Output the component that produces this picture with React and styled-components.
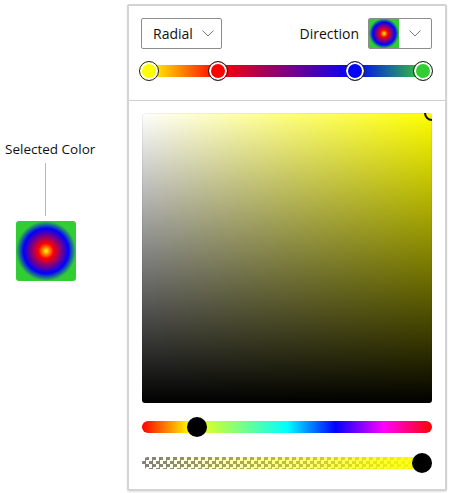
import React from "react";
import styled, { createGlobalStyle } from "styled-components";

const Global = createGlobalStyle`
  html, body { margin: 0; padding: 0; background: #fff; }
  body { font-family: "Open Sans", "Noto Sans", sans-serif; color: #111; }
`;

const Page = styled.div`
  display: flex;
  align-items: flex-start;
  width: 450px;
  height: 493px;
`;

const Side = styled.div`
  width: 127px;
  flex: none;
  display: flex;
  flex-direction: column;
  align-items: flex-start;
  padding: 140px 0 0 5px;
  box-sizing: border-box;
`;

const SideLabel = styled.div`
  font-size: 13.5px;
  line-height: 18px;
  white-space: nowrap;
`;

const Connector = styled.div`
  width: 1px;
  height: 53px;
  margin: 5px 0 0 40px;
  background: #e2b45a;
`;

const GRADIENT =
  "radial-gradient(circle closest-side, #ffff00 0%, #ff0000 25%, #0000ff 75%, #32cd32 100%)";

const Swatch = styled.div`
  width: ${(p) => p.$w}px;
  height: ${(p) => p.$h}px;
  margin-top: ${(p) => p.$mt || 0}px;
  margin-left: ${(p) => p.$ml || 0}px;
  border-radius: ${(p) => p.$r || 0}px;
  background: ${GRADIENT}, #32cd32;
  flex: none;
`;

const Panel = styled.div`
  margin-top: 4px;
  width: 320px;
  height: 487px;
  box-sizing: border-box;
  border: 2px solid #d3d3d3;
  border-radius: 2px;
  box-shadow: 0 1px 2px rgba(0, 0, 0, 0.12);
  background: #fff;
  display: flex;
  flex-direction: column;
`;

const Header = styled.div`
  padding: 12px 13px 19px 12px;
  border-bottom: 1px solid #d0d0d0;
  display: flex;
  flex-direction: column;
  gap: 12px;
`;

const TopRow = styled.div`
  display: flex;
  align-items: center;
  justify-content: space-between;
  height: 31px;
`;

const Select = styled.div`
  height: 31px;
  box-sizing: border-box;
  border: 1px solid #8c8c8c;
  border-radius: 2px;
  display: flex;
  align-items: center;
  overflow: hidden;
  width: ${(p) => p.$w}px;
  padding-left: ${(p) => p.$pl || 0}px;
  font-size: 14px;
  color: #111;
`;

const SelectText = styled.span`
  flex: 1;
  line-height: 20px;
`;

const ChevronBox = styled.span`
  display: flex;
  align-items: center;
  justify-content: center;
  width: ${(p) => p.$w}px;
  flex: none;
`;

const Chevron = () => (
  <svg width="12" height="7" viewBox="0 0 12 7">
    <path d="M0.5 0.5 L6 6 L11.5 0.5" fill="none" stroke="#7a7a7a" strokeWidth="1" />
  </svg>
);

const DirGroup = styled.div`
  display: flex;
  align-items: center;
  gap: 9px;
  font-size: 14px;
`;

const BarWrap = styled.div`
  position: relative;
  height: 20px;
  margin: 0 9px 0 8px;
  display: flex;
  align-items: center;
`;

const GradBar = styled.div`
  flex: 1;
  height: 12px;
  background: linear-gradient(to right, #ffff00 0%, #ff0000 25%, #0000ff 75%, #32cd32 100%);
`;

const Stop = styled.div`
  position: absolute;
  top: 0;
  width: 20px;
  height: 20px;
  box-sizing: border-box;
  margin-left: -10px;
  border-radius: 50%;
  border: 1px solid #222;
  box-shadow: inset 0 0 0 2px #fff;
  background: ${(p) => p.$c};
`;

const Body = styled.div`
  padding: 12px 13px 0 13px;
  display: flex;
  flex-direction: column;
`;

const Area = styled.div`
  position: relative;
  height: 290px;
  border-radius: 3px;
  overflow: hidden;
  background: linear-gradient(to top, #000, rgba(0, 0, 0, 0)),
    linear-gradient(to right, #fff, #ff0);
  box-shadow: inset 0 0 0 1px rgba(0, 0, 0, 0.06);
`;

const AreaHandle = styled.div`
  position: absolute;
  right: -8px;
  top: -8px;
  width: 16px;
  height: 16px;
  box-sizing: border-box;
  border: 2px solid #111;
  border-radius: 50%;
`;

const Slider = styled.div`
  position: relative;
  height: 20px;
  margin-top: ${(p) => p.$mt}px;
  display: flex;
  align-items: center;
`;

const HueTrack = styled.div`
  flex: 1;
  height: 12px;
  border-radius: 6px;
  background: linear-gradient(
    to right,
    #f00 0%,
    #ff0 16.67%,
    #0ff 50%,
    #00f 66.67%,
    #f0f 83.33%,
    #f00 100%
  );
`;

const AlphaTrack = styled.div`
  flex: 1;
  height: 12px;
  border-radius: 6px;
  background: linear-gradient(to right, rgba(255, 255, 0, 0), #ff0),
    repeating-conic-gradient(#7f7f7f 0 25%, #fff 0 50%) 0 0 / 7px 7px;
`;

const Thumb = styled.div`
  position: absolute;
  top: 0;
  width: 20px;
  height: 20px;
  margin-left: -10px;
  border-radius: 50%;
  background: #000;
`;

const stops = [
  { p: 0, c: "#ffff00" },
  { p: 25, c: "#ff0000" },
  { p: 75, c: "#0000ff" },
  { p: 100, c: "#32cd32" },
];

export default function App() {
  return (
    <>
      <Global />
      <Page>
        <Side>
          <SideLabel>Selected Color</SideLabel>
          <Connector />
          <Swatch $w={60} $h={60} $mt={5} $ml={11} $r={3} />
        </Side>
        <Panel>
          <Header>
            <TopRow>
              <Select $w={81} $pl={11}>
                <SelectText>Radial</SelectText>
                <ChevronBox $w={30}>
                  <Chevron />
                </ChevronBox>
              </Select>
              <DirGroup>
                <span>Direction</span>
                <Select $w={64}>
                  <Swatch $w={30} $h={31} />
                  <ChevronBox $w={32}>
                    <Chevron />
                  </ChevronBox>
                </Select>
              </DirGroup>
            </TopRow>
            <BarWrap>
              <GradBar />
              {stops.map((s) => (
                <Stop key={s.p} $c={s.c} style={{ left: `${s.p}%` }} />
              ))}
            </BarWrap>
          </Header>
          <Body>
            <Area>
              <AreaHandle />
            </Area>
            <Slider $mt={14}>
              <HueTrack />
              <Thumb style={{ left: `calc(10px + (100% - 20px) * ${60 / 360})` }} />
            </Slider>
            <Slider $mt={16}>
              <AlphaTrack />
              <Thumb style={{ left: "calc(100% - 10px)" }} />
            </Slider>
          </Body>
        </Panel>
      </Page>
    </>
  );
}
